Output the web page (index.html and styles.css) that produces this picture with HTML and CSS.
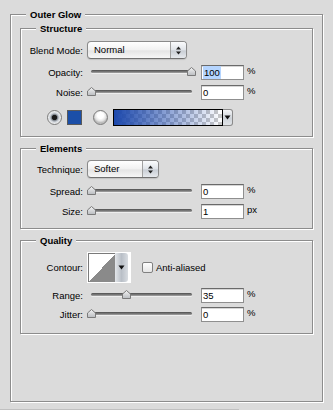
FILE: index.html
```html
<html>
<head>
<link rel="stylesheet" href="styles.css">
</head>
<body>
<svg class="defs" width="0" height="0">
  <defs>
    <linearGradient id="thumbFill" x1="0" y1="0" x2="0" y2="1">
      <stop offset="0" stop-color="#f4f4f4"/>
      <stop offset="1" stop-color="#b9bcc0"/>
    </linearGradient>
  </defs>
</svg>

<fieldset class="panel">
  <legend class="panel_title">Outer Glow</legend>

  <fieldset class="group">
    <legend class="group_title">Structure</legend>
    <div class="row row_popup">
      <span class="label">Blend Mode:</span>
      <div class="popup popup_blend">
        <span class="popup_text">Normal</span>
        <span class="popup_btn"><svg width="7" height="11"><path d="M3.5 1.5L6 4.5H1Z M3.5 9.5L6 6.5H1Z" fill="#222"/></svg></span>
      </div>
    </div>
    <div class="row row_field gap6">
      <span class="label">Opacity:</span>
      <div class="slider">
        <div class="track"></div>
        <svg class="thumb" style="left:100px" width="9" height="9"><path d="M0.5 8.5V4L4.5 0.5L8.5 4V8.5Z" fill="url(#thumbFill)" stroke="#7a7a7a"/></svg>
      </div>
      <div class="field"><span class="selected">100</span></div>
      <span class="unit">%</span>
    </div>
    <div class="row row_field gap5">
      <span class="label">Noise:</span>
      <div class="slider">
        <div class="track"></div>
        <svg class="thumb" style="left:0px" width="9" height="9"><path d="M0.5 8.5V4L4.5 0.5L8.5 4V8.5Z" fill="url(#thumbFill)" stroke="#7a7a7a"/></svg>
      </div>
      <div class="field">0</div>
      <span class="unit">%</span>
    </div>
    <div class="row row_color gap9">
      <span class="radio radio_on"></span>
      <span class="swatch"></span>
      <span class="radio radio_off"></span>
      <div class="gradient_pick">
        <span class="gradient"></span>
        <span class="gradient_btn"><svg width="7" height="5"><path d="M0.5 0.5H6.5L3.5 4.5Z" fill="#111"/></svg></span>
      </div>
    </div>
  </fieldset>

  <fieldset class="group">
    <legend class="group_title">Elements</legend>
    <div class="row row_popup">
      <span class="label">Technique:</span>
      <div class="popup popup_tech">
        <span class="popup_text">Softer</span>
        <span class="popup_btn"><svg width="7" height="11"><path d="M3.5 1.5L6 4.5H1Z M3.5 9.5L6 6.5H1Z" fill="#222"/></svg></span>
      </div>
    </div>
    <div class="row row_field gap6">
      <span class="label">Spread:</span>
      <div class="slider">
        <div class="track"></div>
        <svg class="thumb" style="left:0px" width="9" height="9"><path d="M0.5 8.5V4L4.5 0.5L8.5 4V8.5Z" fill="url(#thumbFill)" stroke="#7a7a7a"/></svg>
      </div>
      <div class="field">0</div>
      <span class="unit">%</span>
    </div>
    <div class="row row_field gap5">
      <span class="label">Size:</span>
      <div class="slider">
        <div class="track"></div>
        <svg class="thumb" style="left:0px" width="9" height="9"><path d="M0.5 8.5V4L4.5 0.5L8.5 4V8.5Z" fill="url(#thumbFill)" stroke="#7a7a7a"/></svg>
      </div>
      <div class="field">1</div>
      <span class="unit">px</span>
    </div>
  </fieldset>

  <fieldset class="group group_last">
    <legend class="group_title">Quality</legend>
    <div class="row row_contour">
      <span class="label">Contour:</span>
      <div class="contour">
        <span class="contour_curve"></span>
        <span class="contour_btn"><svg width="7" height="5"><path d="M0.5 0.5H6.5L3.5 4.5Z" fill="#111"/></svg></span>
      </div>
      <span class="checkbox"></span>
      <span class="check_label">Anti-aliased</span>
    </div>
    <div class="row row_field gap5">
      <span class="label">Range:</span>
      <div class="slider">
        <div class="track"></div>
        <svg class="thumb" style="left:35px" width="9" height="9"><path d="M0.5 8.5V4L4.5 0.5L8.5 4V8.5Z" fill="url(#thumbFill)" stroke="#7a7a7a"/></svg>
      </div>
      <div class="field">35</div>
      <span class="unit">%</span>
    </div>
    <div class="row row_field gap4">
      <span class="label">Jitter:</span>
      <div class="slider">
        <div class="track"></div>
        <svg class="thumb" style="left:0px" width="9" height="9"><path d="M0.5 8.5V4L4.5 0.5L8.5 4V8.5Z" fill="url(#thumbFill)" stroke="#7a7a7a"/></svg>
      </div>
      <div class="field">0</div>
      <span class="unit">%</span>
    </div>
  </fieldset>
</fieldset>
<div class="scroll_edge"></div>
</body>
</html>
```

FILE: styles.css
```css
body {
	margin: 0;
	background: #dbdbdb;
	font-family: "Liberation Sans", Arial, sans-serif;
	font-size: 9.5px;
	color: #000;
}
.defs {
	position: absolute;
}

/* etched frames */
fieldset {
	box-sizing: border-box;
	margin: 0;
	min-width: 0;
	border: 1px solid #8c8c8c;
	box-shadow: 1px 1px 0 #fff, inset 1px 1px 0 #fff;
}
legend {
	padding: 0 4px;
	line-height: 13px;
	font-weight: bold;
	background: #dbdbdb;
}
.panel {
	width: 313px;
	margin: 8px 0 0 10px;
	padding: 1px 9px 67px 9px;
}
.panel_title {
	margin-left: 6px;
}
.group {
	padding: 6px 0 10px 0;
	margin-bottom: 5px;
}
.group + .group {
	padding-top: 5px;
}
.group_last {
	margin-bottom: 0;
	padding-bottom: 11px;
}
.group:nth-of-type(2) {
	padding-bottom: 9px;
}
.group_title {
	margin-left: 15px;
}

/* rows */
.row {
	display: flex;
	align-items: center;
}
.row_popup { height: 18px; }
.row_field { height: 15px; }
.row_color { height: 17px; }
.row_contour { height: 31px; }
.gap4 { margin-top: 4px; }
.gap5 { margin-top: 5px; }
.gap6 { margin-top: 6px; }
.gap9 { margin-top: 9px; }

.label {
	width: 62px;
	margin-right: 4px;
	text-align: right;
	white-space: nowrap;
}

/* popup menus */
.popup {
	box-sizing: border-box;
	display: flex;
	height: 18px;
	border: 1px solid #8a8a8a;
	border-bottom-color: #707070;
	border-radius: 4px;
	background: linear-gradient(#ffffff, #f1f1f1 50%, #e4e4e4 55%, #f6f6f6);
	box-shadow: 0 1px 1px rgba(0, 0, 0, 0.12);
	overflow: hidden;
}
.popup_blend { width: 100px; }
.popup_tech { width: 72px; }
.popup_text {
	flex: 1;
	padding-left: 6px;
	line-height: 16px;
}
.popup_btn {
	width: 15px;
	display: flex;
	align-items: center;
	justify-content: center;
	border-left: 1px solid #a0a0a0;
	background: linear-gradient(#fbfcfd, #dfe3e8 50%, #c9ced5 55%, #e6e9ed);
}

/* sliders */
.slider {
	position: relative;
	width: 109px;
	height: 15px;
}
.track {
	position: absolute;
	left: 4px;
	top: 5px;
	width: 101px;
	height: 3px;
	border-radius: 2px;
	background: linear-gradient(#4e4e4e, #7c7c7c 60%, #a8a8a8);
	box-shadow: 0 1px 0 #eeeeee;
}
.thumb {
	position: absolute;
	top: 2px;
}

.field {
	box-sizing: border-box;
	width: 43px;
	height: 15px;
	margin-left: 5px;
	padding-left: 1px;
	border: 1px solid #8f8f8f;
	border-top-color: #6a6a6a;
	background: #fff;
	box-shadow: inset 0 1px 0 #d6d6d6;
	line-height: 13px;
}
.selected {
	display: inline-block;
	padding: 0 1px;
	background: #b5d5ff;
}
.unit {
	margin-left: 3px;
	align-self: flex-start;
	line-height: 11px;
}

/* colour row */
.radio {
	box-sizing: border-box;
	width: 15px;
	height: 15px;
	border-radius: 50%;
	border: 1px solid #7a7a7a;
}
.radio_on {
	margin-left: 26px;
	background: radial-gradient(circle, #1a1a1a 0 2.2px, #7d838b 3px, #cfd4da 4.5px, #f2f2f2 6.5px);
}
.radio_off {
	margin-left: 11px;
	background: radial-gradient(circle at 50% 35%, #ffffff 0 3px, #e3e3e3 5.5px, #bdbdbd 7px);
}
.swatch {
	box-sizing: border-box;
	width: 15px;
	height: 15px;
	margin-left: 5px;
	border: 1px solid #5a5a5a;
	background: #1b4fa8;
}
.gradient_pick {
	display: flex;
	margin-left: 5px;
	height: 17px;
}
.gradient {
	box-sizing: border-box;
	width: 110px;
	border: 1px solid #000;
	background:
		linear-gradient(to right, rgba(28, 72, 172, 1), rgba(28, 72, 172, 0)),
		repeating-conic-gradient(#c8c8c8 0 25%, #ffffff 0 50%) 0 0 / 8px 8px;
}
.gradient_btn {
	box-sizing: border-box;
	width: 10px;
	display: flex;
	align-items: center;
	justify-content: center;
	border: 1px solid #8a8a8a;
	border-left: 0;
	border-radius: 0 3px 3px 0;
	background: linear-gradient(#f4f5f7, #cdd2d8 55%, #e2e5e9);
}

/* contour row */
.contour {
	box-sizing: border-box;
	width: 44px;
	height: 31px;
	display: flex;
	padding: 1px 3px 1px 1px;
	background: #fff;
}
.contour_curve {
	flex: 1;
	border-left: 1px solid #7a7a7a;
	border-top: 1px solid #7a7a7a;
	background: linear-gradient(to bottom right, #ffffff 50%, #8a8a8a 50%);
}
.contour_btn {
	width: 13px;
	display: flex;
	align-items: center;
	justify-content: center;
	border-radius: 0 3px 3px 0;
	background: linear-gradient(to right, #e3e6ea, #b9bfc7 50%, #d8dce1);
}
.checkbox {
	box-sizing: border-box;
	width: 11px;
	height: 11px;
	margin-left: 11px;
	border: 1px solid #808080;
	border-radius: 2px;
	background: linear-gradient(#fdfdfd, #e6e6e6);
}
.check_label {
	margin-left: 3px;
}

.scroll_edge {
	width: 239px;
	height: 1px;
	margin-top: 7px;
	background: #c0c0c0;
}
```
